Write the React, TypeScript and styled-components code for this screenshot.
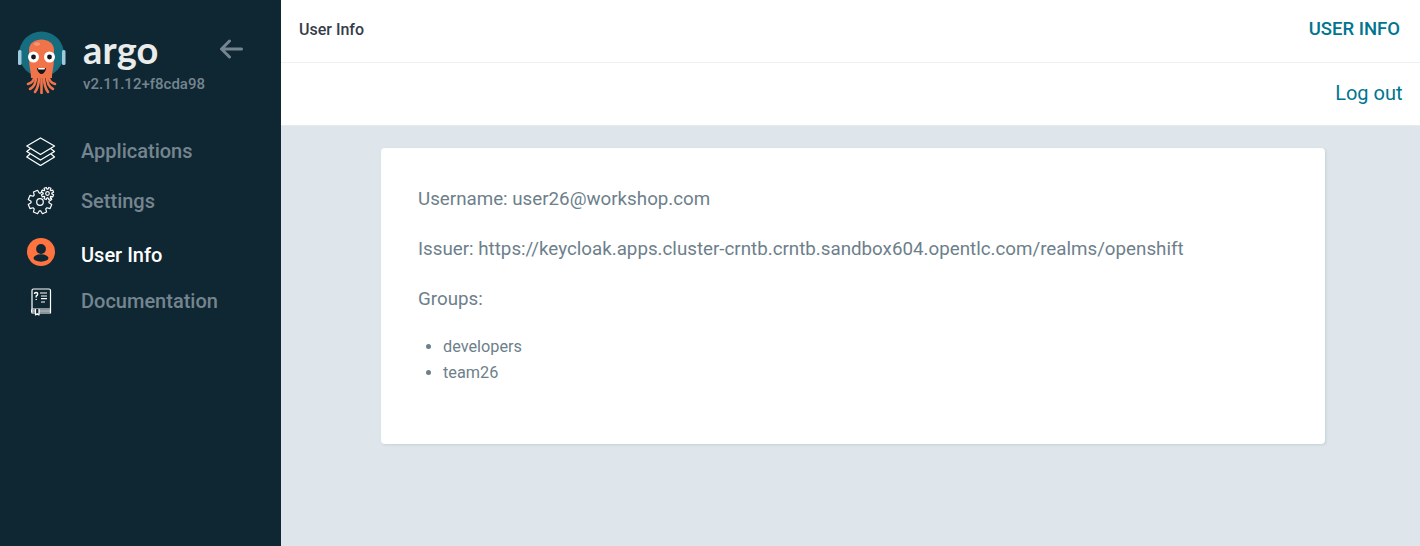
import React from 'react';
import styled, { createGlobalStyle } from 'styled-components';

const GlobalStyle = createGlobalStyle`
  html, body {
    margin: 0;
    padding: 0;
    height: 100%;
    background: #dee6eb;
    font-family: Roboto, "Liberation Sans", sans-serif;
  }
  * {
    box-sizing: border-box;
  }
`;

const Page = styled.div`
  display: flex;
  height: 546px;
  overflow: hidden;
`;

const Sidebar = styled.nav`
  width: 281px;
  flex: none;
  background: #0f2733;
  padding-top: 31px;
`;

const LogoRow = styled.div`
  display: flex;
  height: 63px;
  padding-left: 17px;
`;

const LogoText = styled.div`
  margin-left: 16px;
  width: 136px;
`;

const Wordmark = styled.div`
  font-family: Lato, sans-serif;
  font-size: 38px;
  font-weight: 700;
  line-height: 36px;
  letter-spacing: 0.2px;
  color: #e9eceb;
`;

const Version = styled.div`
  margin-top: 8px;
  font-size: 15px;
  font-weight: 500;
  line-height: 18px;
  color: #75858f;
`;

const BackButton = styled.div`
  margin-top: 8px;
  color: #75858f;
  line-height: 0;
`;

const NavList = styled.div`
  margin-top: 32px;
  display: flex;
  flex-direction: column;
`;

const NavItem = styled.div<{ $height: number; $active?: boolean }>`
  display: flex;
  align-items: center;
  height: ${({ $height }) => $height}px;
  padding-left: 26px;
  font-size: 20px;
  font-weight: 500;
  color: ${({ $active }) => ($active ? '#ffffff' : '#75858f')};
`;

const NavIcon = styled.span<{ $lift?: number }>`
  width: 55px;
  flex: none;
  line-height: 0;
  margin-bottom: ${({ $lift }) => ($lift ? $lift * 2 : 0)}px;
`;

const Main = styled.main`
  flex: 1;
  min-width: 0;
  display: flex;
  flex-direction: column;
`;

const TopBar = styled.header`
  height: 63px;
  background: #fff;
  border-bottom: 1px solid #eff2f4;
  display: flex;
  align-items: center;
  justify-content: space-between;
  padding: 0 20px 4px 18px;
`;

const PageTitle = styled.div`
  font-size: 16px;
  font-weight: 500;
  color: #363c4a;
`;

const TopLabel = styled.div`
  font-size: 18.5px;
  font-weight: 500;
  color: #00758f;
`;

const ActionBar = styled.div`
  height: 63px;
  background: #fff;
  border-bottom: 1px solid #e6ebee;
  display: flex;
  align-items: center;
  justify-content: flex-end;
  padding: 0 17.5px 2px 0;
`;

const LogoutLink = styled.a`
  font-size: 20px;
  color: #00758f;
`;

const Card = styled.section`
  margin: 22px 95px 0 100px;
  height: 296px;
  background: #fff;
  border-radius: 4px;
  box-shadow: 1px 1px 3px #c3cfd7;
  padding: 36px 37px;
  color: #6d7f8b;
`;

const InfoLine = styled.p`
  margin: 0 0 20px;
  font-size: 18.75px;
  line-height: 30px;
`;

const GroupList = styled.ul`
  margin: 0;
  padding: 0 0 0 25px;
  font-size: 16.25px;
  line-height: 26px;
`;

const LayersIcon = () => (
  <svg width="30" height="30" viewBox="0 0 30 30" fill="none" stroke="#fff" strokeWidth="1.3" strokeLinejoin="round">
    <path d="M14.500 2 L28.500 10 L14.500 18.500 L0.800 10 Z" />
    <path d="M4.500 12.500 L0.800 15.500 L14.500 24 L28.500 15.500 L24.500 12.500" />
    <path d="M4 18 L0.800 21 L14.500 29.500 L28.500 21 L25 18" />
  </svg>
);

const gearPath = (cx: number, cy: number, r1: number, r2: number, teeth: number) => {
  const pts: string[] = [];
  const step = (Math.PI * 2) / teeth;
  for (let i = 0; i < teeth; i++) {
    const a = i * step + step / 2;
    [
      [-0.32, r1],
      [-0.2, r2],
      [0.2, r2],
      [0.32, r1],
    ].forEach(([o, r]) => {
      const t = a + o * step * 1.2;
      pts.push(`${(cx + Math.cos(t) * r).toFixed(2)} ${(cy + Math.sin(t) * r).toFixed(2)}`);
    });
  }
  return `M${pts.join(' L')} Z`;
};

const GearsIcon = () => (
  <svg width="32" height="32" viewBox="0 0 32 32" fill="none" stroke="#fff" strokeWidth="1.2" strokeLinejoin="round">
    <path d={gearPath(14, 17, 9, 12, 8)} />
    <circle cx="14" cy="17" r="3.300" />
    <path d={gearPath(21.500, 8.500, 4.300, 6.200, 8)} fill="#0f2733" />
    <circle cx="21.500" cy="8.500" r="1.800" />
  </svg>
);

const UserCircleIcon = () => (
  <svg width="30" height="30" viewBox="0 0 30 30">
    <circle cx="15" cy="15" r="14" fill="#fe733f" />
    <circle cx="15" cy="12" r="4.900" fill="#0f2733" />
    <ellipse cx="15" cy="21" rx="7.500" ry="3.700" fill="#0f2733" />
  </svg>
);

const BookIcon = () => (
  <svg width="32" height="32" viewBox="0 0 32 32" fill="none" stroke="#fff" strokeWidth="1.200" strokeLinejoin="round">
    <path d="M6 24 V5.500 Q6 4 7.500 4 H23 Q24.500 4 24.500 5.500 V24 Z" />
    <path d="M6 24 Q5 26 6 28 H24.500 V24" />
    <path d="M6 26 H24.500" />
    <path d="M9.500 24 V30 L11.200 28.700 L13 30 V24" fill="#0f2733" />
    <path d="M14 8 H21 M15 11 H21 M15 13.700 H21 M15 17 H19" />
    <path d="M8.500 9 Q8.500 7.500 10 7.500 Q11.700 7.500 11.700 9 Q11.700 10.300 10.200 11 V12.500 M10.200 14 V15" strokeWidth="1.400" />
  </svg>
);

const ArgoLogo = () => (
  <svg width="50" height="63" viewBox="0 0 50 63">
    <circle cx="24.500" cy="23" r="22.500" fill="#166d7f" />
    <rect x="1" y="19" width="3.500" height="15" rx="1.500" fill="#9fc9dc" />
    <rect x="45" y="19" width="3.500" height="15" rx="1.500" fill="#9fc9dc" />
    <path d="M12 27 V19 C12 5 37 5 37 19 V27 C37 36 35 40 35 47 H14 C14 40 12 36 12 27 Z" fill="#f0734a" />
    <g fill="none" stroke="#f0734a" strokeWidth="2.600" strokeLinecap="round">
      <path d="M18 44 C17 50 15 52 11 53" />
      <path d="M19 46 C19 52 17 56 13 58" />
      <path d="M22 46 C22 53 21 57 18 61" />
      <path d="M24.500 46 V62" />
      <path d="M27 46 C27 53 28 57 31 61" />
      <path d="M30 46 C30 52 32 56 36 58" />
      <path d="M31 44 C32 50 34 52 38 53" />
    </g>
    <circle cx="16.500" cy="26" r="5.500" fill="#fff" />
    <circle cx="32.500" cy="26" r="5.500" fill="#fff" />
    <circle cx="16.500" cy="26" r="2.400" fill="#15171c" />
    <circle cx="32.500" cy="26" r="2.400" fill="#15171c" />
    <path d="M20 37 H29 C28.500 41 26 43 24.500 43 C23 43 20.500 41 20 37 Z" fill="#15171c" />
    <path d="M21 37 H28 L27.500 38.500 H21.500 Z" fill="#fff" />
    <ellipse cx="20" cy="13" rx="3" ry="1.800" fill="#f59476" />
  </svg>
);

const ArrowLeftIcon = () => (
  <svg width="24" height="20" viewBox="0 0 24 20" fill="none" stroke="currentColor" strokeWidth="3" strokeLinecap="round" strokeLinejoin="round">
    <path d="M22.500 10 H3 M10.500 2 L2.500 10 L10.500 18" />
  </svg>
);

export default function App() {
  return (
    <>
      <GlobalStyle />
      <Page>
        <Sidebar>
          <LogoRow>
            <ArgoLogo />
            <LogoText>
              <Wordmark>argo</Wordmark>
              <Version>v2.11.12+f8cda98</Version>
            </LogoText>
            <BackButton>
              <ArrowLeftIcon />
            </BackButton>
          </LogoRow>
          <NavList>
            <NavItem $height={50}>
              <NavIcon>
                <LayersIcon />
              </NavIcon>
              Applications
            </NavItem>
            <NavItem $height={50}>
              <NavIcon>
                <GearsIcon />
              </NavIcon>
              Settings
            </NavItem>
            <NavItem $height={58} $active>
              <NavIcon $lift={3}>
                <UserCircleIcon />
              </NavIcon>
              User Info
            </NavItem>
            <NavItem $height={34}>
              <NavIcon>
                <BookIcon />
              </NavIcon>
              Documentation
            </NavItem>
          </NavList>
        </Sidebar>
        <Main>
          <TopBar>
            <PageTitle>User Info</PageTitle>
            <TopLabel>USER INFO</TopLabel>
          </TopBar>
          <ActionBar>
            <LogoutLink>Log out</LogoutLink>
          </ActionBar>
          <Card>
            <InfoLine>Username: user26@workshop.com</InfoLine>
            <InfoLine>Issuer: https://keycloak.apps.cluster-crntb.crntb.sandbox604.opentlc.com/realms/openshift</InfoLine>
            <InfoLine>Groups:</InfoLine>
            <GroupList>
              <li>developers</li>
              <li>team26</li>
            </GroupList>
          </Card>
        </Main>
      </Page>
    </>
  );
}
